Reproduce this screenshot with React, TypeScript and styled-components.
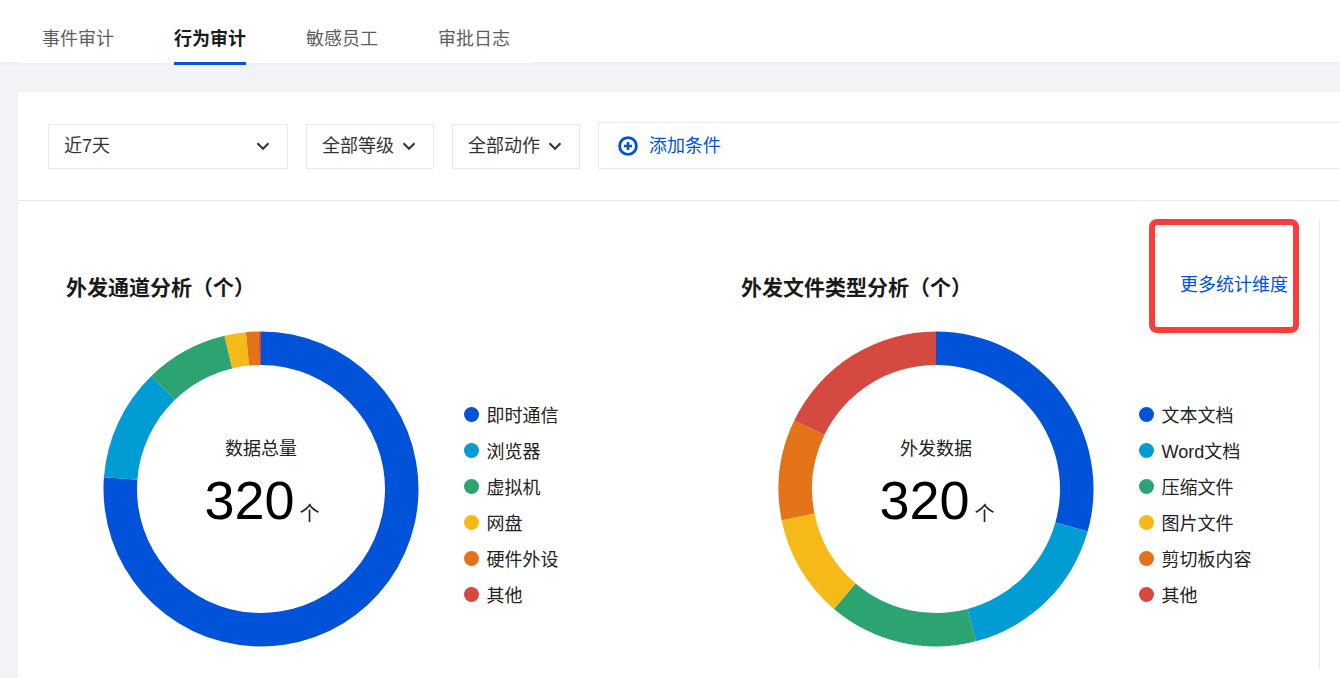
import React from "react";
import styled, { createGlobalStyle } from "styled-components";

const FONT = `"Liberation Sans", "Noto Sans CJK SC", sans-serif`;

const Global = createGlobalStyle`
  html, body { margin: 0; padding: 0; background: #f2f3f7; overflow: hidden; }
  * { box-sizing: border-box; }
`;

const Page = styled.div`
  position: relative;
  width: 1340px;
  height: 678px;
  overflow: hidden;
  background: #f2f3f7;
  font-family: ${FONT};
`;

const Header = styled.header`
  height: 62px;
  background: #fff;
  box-shadow: 0 1px 3px rgba(0, 0, 0, 0.05);
`;

const Tabs = styled.nav`
  display: flex;
  gap: 60px;
  width: 516px;
  height: 63px;
  margin-left: 18px;
  padding-left: 24px;
  background: #fff;
`;

const Tab = styled.div<{ $active?: boolean }>`
  height: 65px;
  padding-top: 27px;
  font-size: 18px;
  line-height: 24px;
  font-weight: ${(p) => (p.$active ? 700 : 400)};
  color: ${(p) => (p.$active ? "#1a1a1a" : "#5e5e5e")};
  border-bottom: ${(p) => (p.$active ? "3px solid #0052d9" : "3px solid transparent")};
`;

const Card = styled.main`
  margin: 30px 0 0 18px;
  height: 586px;
  background: #fff;
`;

const FilterBar = styled.div`
  display: flex;
  align-items: flex-end;
  gap: 18px;
  height: 109px;
  padding: 0 0 31px 30px;
  border-bottom: 1px solid #e7e9f0;
`;

const Select = styled.div<{ $w: number }>`
  display: flex;
  align-items: center;
  justify-content: space-between;
  flex: none;
  width: ${(p) => p.$w}px;
  height: 45px;
  padding: 0 17px 6px 15px;
  border: 1px solid #e7e9f0;
  font-size: 18px;
  color: #333;
`;

const AddCondition = styled.div`
  display: flex;
  align-items: center;
  flex: 1;
  gap: 11px;
  height: 47px;
  padding-left: 19px;
  border: 1px solid #e7e9f0;
  border-right: none;
  font-size: 18px;
  color: #0052d9;
`;

const AddLabel = styled.span`
  padding-bottom: 3px;
`;

const Charts = styled.section`
  display: flex;
  height: 450px;
  margin-top: 18px;
  margin-right: 20px;
  border-right: 1px solid #e7e9f0;
`;

const ChartPanel = styled.div<{ $w: number }>`
  position: relative;
  flex: none;
  width: ${(p) => p.$w}px;
  padding-top: 57px;
`;

const ChartHeader = styled.div`
  display: flex;
  justify-content: space-between;
  align-items: center;
  height: 24px;
  padding-left: 48px;
`;

const ChartTitle = styled.h2`
  margin: 0;
  font-size: 21px;
  line-height: 24px;
  font-weight: 700;
  color: #1a1a1a;
`;

const MoreLink = styled.a`
  margin-right: 31px;
  margin-top: -10px;
  font-size: 18px;
  color: #0052d9;
`;

const ChartBody = styled.div<{ $left: number }>`
  display: flex;
  align-items: center;
  margin-top: 31px;
  padding-left: ${(p) => p.$left}px;
`;

const DonutWrap = styled.div`
  position: relative;
  flex: none;
  width: 316px;
  height: 316px;
`;

const Center = styled.div`
  position: absolute;
  inset: 0;
  display: flex;
  flex-direction: column;
  align-items: center;
  padding-top: 105px;
`;

const CenterLabel = styled.div`
  font-size: 18px;
  line-height: 26px;
  color: #222;
`;

const CenterValue = styled.div`
  display: flex;
  align-items: baseline;
  margin-top: 5px;
  padding-left: 2px;
  color: #000;
  font-size: 54px;
  line-height: 66px;
`;

const Unit = styled.span`
  margin-left: 5px;
  font-size: 20px;
  color: #222;
  transform: translateY(2px);
`;

const Legend = styled.ul`
  list-style: none;
  margin: 30px 0 0 44.5px;
  padding: 0;
  display: flex;
  flex-direction: column;
  gap: 12px;
`;

const LegendItem = styled.li`
  display: flex;
  align-items: center;
  gap: 8px;
  height: 24px;
  font-size: 18px;
  color: #222;
`;

const Dot = styled.span<{ $c: string }>`
  flex: none;
  width: 15px;
  height: 15px;
  border-radius: 50%;
  background: ${(p) => p.$c};
`;

const Highlight = styled.div`
  position: absolute;
  left: 1149px;
  top: 219px;
  width: 150px;
  height: 114px;
  border: 6px solid #fb3c3c;
  border-radius: 8px;
  pointer-events: none;
`;

const C = {
  blue: "#0052d9",
  cyan: "#029cd4",
  green: "#2ba471",
  yellow: "#f5ba18",
  orange: "#e37318",
  red: "#d54941",
};

type Seg = [string, number];

function arc(from: number, to: number) {
  const R = 157.5;
  const r = 124;
  const c = 158;
  const pt = (rad: number, deg: number) => {
    const a = (deg * Math.PI) / 180;
    return `${(c + rad * Math.sin(a)).toFixed(2)} ${(c - rad * Math.cos(a)).toFixed(2)}`;
  };
  const large = to - from > 180 ? 1 : 0;
  return `M${pt(R, from)} A${R} ${R} 0 ${large} 1 ${pt(R, to)} L${pt(r, to)} A${r} ${r} 0 ${large} 0 ${pt(r, from)} Z`;
}

const Donut: React.FC<{ segs: Seg[]; label: string }> = ({ segs, label }) => {
  let start = 0;
  return (
    <DonutWrap>
      <svg width="316" height="316" viewBox="0 0 316 316">
        {segs.map(([color, end]) => {
          const d = arc(start, end);
          start = end;
          return <path key={color} d={d} fill={color} />;
        })}
      </svg>
      <Center>
        <CenterLabel>{label}</CenterLabel>
        <CenterValue>
          320<Unit>个</Unit>
        </CenterValue>
      </Center>
    </DonutWrap>
  );
};

const Chevron = () => (
  <svg width="14" height="14" viewBox="0 0 14 14" fill="none">
    <path d="M1.5 6.2 L7 11.7 L12.5 6.2" stroke="#333" strokeWidth="2.1" />
  </svg>
);

const PlusCircle = () => (
  <svg width="20" height="20" viewBox="0 0 20 20" fill="none">
    <circle cx="10" cy="10" r="8.4" stroke="#0052d9" strokeWidth="2.8" />
    <path d="M10 6 V14 M6 10 H14" stroke="#0052d9" strokeWidth="2.6" />
  </svg>
);

const channel: [string, string][] = [
  ["即时通信", C.blue],
  ["浏览器", C.cyan],
  ["虚拟机", C.green],
  ["网盘", C.yellow],
  ["硬件外设", C.orange],
  ["其他", C.red],
];
const fileTypes: [string, string][] = [
  ["文本文档", C.blue],
  ["Word文档", C.cyan],
  ["压缩文件", C.green],
  ["图片文件", C.yellow],
  ["剪切板内容", C.orange],
  ["其他", C.red],
];

const LegendList: React.FC<{ items: [string, string][] }> = ({ items }) => (
  <Legend>
    {items.map(([t, c]) => (
      <LegendItem key={t}>
        <Dot $c={c} />
        {t}
      </LegendItem>
    ))}
  </Legend>
);

export default function App() {
  return (
    <Page>
      <Global />
      <Header>
        <Tabs>
          <Tab>事件审计</Tab>
          <Tab $active>行为审计</Tab>
          <Tab>敏感员工</Tab>
          <Tab>审批日志</Tab>
        </Tabs>
      </Header>
      <Card>
        <FilterBar>
          <Select $w={240}>
            近7天
            <Chevron />
          </Select>
          <Select $w={128}>
            全部等级
            <Chevron />
          </Select>
          <Select $w={128}>
            全部动作
            <Chevron />
          </Select>
          <AddCondition>
            <PlusCircle />
            <AddLabel>添加条件</AddLabel>
          </AddCondition>
        </FilterBar>
        <Charts>
          <ChartPanel $w={675}>
            <ChartHeader>
              <ChartTitle>外发通道分析（个）</ChartTitle>
            </ChartHeader>
            <ChartBody $left={85}>
              <Donut
                label="数据总量"
                segs={[
                  [C.blue, 274.3],
                  [C.cyan, 315.9],
                  [C.green, 346.6],
                  [C.yellow, 354.5],
                  [C.orange, 359.2],
                  [C.red, 360],
                ]}
              />
              <LegendList items={channel} />
            </ChartBody>
          </ChartPanel>
          <ChartPanel $w={626}>
            <ChartHeader>
              <ChartTitle>外发文件类型分析（个）</ChartTitle>
              <MoreLink>更多统计维度</MoreLink>
            </ChartHeader>
            <ChartBody $left={85}>
              <Donut
                label="外发数据"
                segs={[
                  [C.blue, 105.7],
                  [C.cyan, 165.3],
                  [C.green, 220.4],
                  [C.yellow, 258.6],
                  [C.orange, 295.8],
                  [C.red, 360],
                ]}
              />
              <LegendList items={fileTypes} />
            </ChartBody>
          </ChartPanel>
        </Charts>
      </Card>
      <Highlight />
    </Page>
  );
}
